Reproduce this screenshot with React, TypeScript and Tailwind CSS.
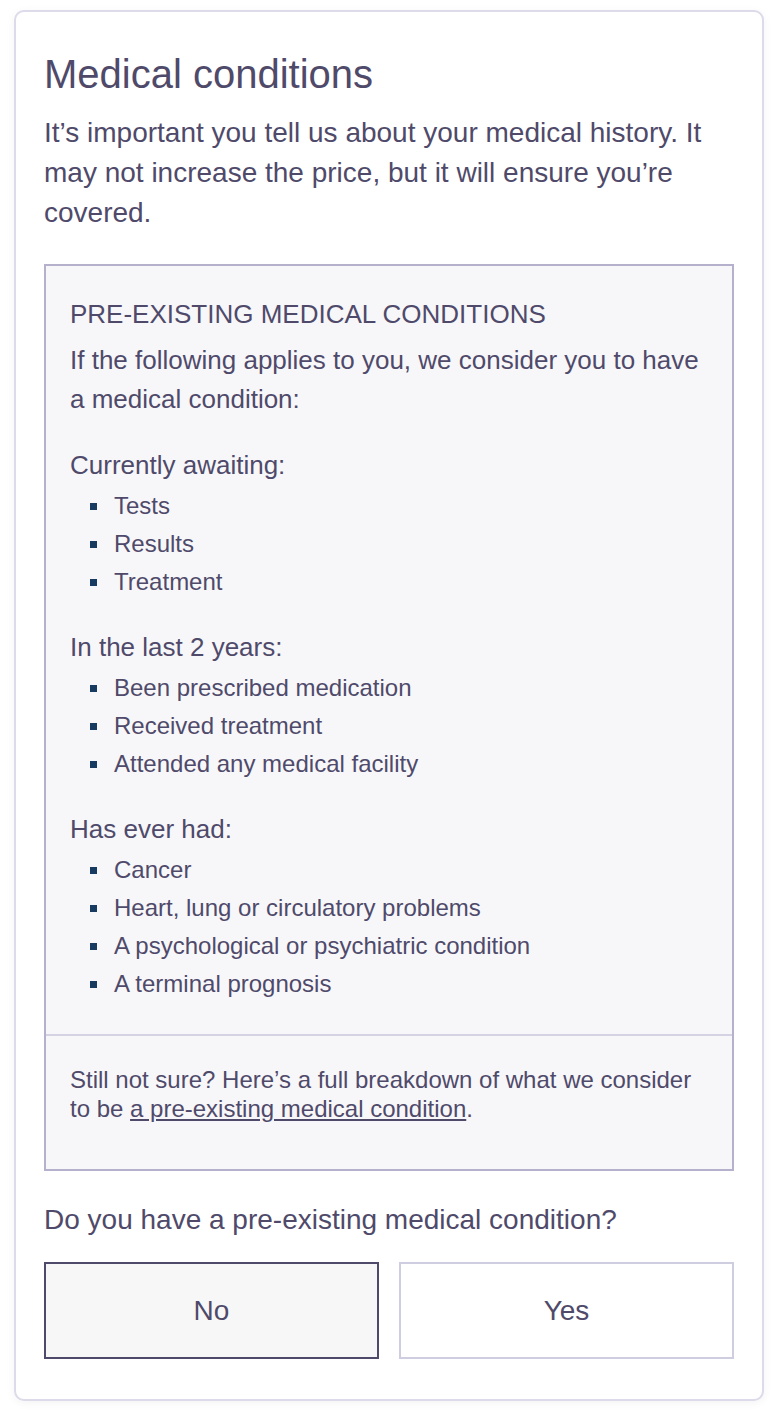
import React from "react";

const groups = [
  { title: "Currently awaiting:", items: ["Tests", "Results", "Treatment"] },
  {
    title: "In the last 2 years:",
    items: ["Been prescribed medication", "Received treatment", "Attended any medical facility"],
  },
  {
    title: "Has ever had:",
    items: [
      "Cancer",
      "Heart, lung or circulatory problems",
      "A psychological or psychiatric condition",
      "A terminal prognosis",
    ],
  },
];

export default function App() {
  return (
    <div className="min-h-screen bg-white pt-[10px] px-[14px] pb-[18px] font-['Liberation_Sans',Arial,sans-serif] text-[#4f4a6a]">
      <div className="rounded-[10px] border-2 border-[#dddaea] bg-white px-[28px] pt-[38px] pb-[40px] shadow-[0_2px_10px_rgba(0,0,0,0.05)]">
        <h1 className="text-[40px] leading-[48px]">Medical conditions</h1>
        <p className="mt-[15px] text-[28px] leading-[40px]">
          It’s important you tell us about your medical history. It may not increase the price, but it will
          ensure you’re covered.
        </p>

        <div className="mt-[31px] border-2 border-[#b5b1cc] bg-[#f7f7fa]">
          <div className="px-[24px] pt-[29px] pb-[31px]">
            <h2 className="text-[26px] leading-[39px]">PRE-EXISTING MEDICAL CONDITIONS</h2>
            <p className="mt-[7px] text-[26px] leading-[39px]">
              If the following applies to you, we consider you to have a medical condition:
            </p>
            {groups.map((g) => (
              <div key={g.title} className="mt-[27px]">
                <div className="text-[26px] leading-[39px]">{g.title}</div>
                <ul className="mt-[2px]">
                  {g.items.map((it) => (
                    <li key={it} className="flex items-center text-[24px] leading-[38px]">
                      <span className="ml-[20px] mr-[17px] h-[7px] w-[7px] bg-[#163a60]" />
                      {it}
                    </li>
                  ))}
                </ul>
              </div>
            ))}
          </div>
          <div className="border-t-2 border-[#d5d2e4] px-[24px] pt-[29px] pb-[46px] text-[24px] leading-[29px]">
            Still not sure? Here’s a full breakdown of what we consider to be{" "}
            <a href="#" className="underline underline-offset-2">
              a pre-existing medical condition
            </a>
            .
          </div>
        </div>

        <p className="mt-[32px] text-[28px] leading-[34px]">Do you have a pre-existing medical condition?</p>

        <div className="mt-[25px] grid grid-cols-2 gap-[20px]">
          <button className="h-[97px] border-2 border-[#4f4a6a] bg-[#f7f7f8] text-[28px] text-[#4f4a6a]">
            No
          </button>
          <button className="h-[97px] border-2 border-[#cfcde0] bg-white text-[28px] text-[#4f4a6a]">
            Yes
          </button>
        </div>
      </div>
    </div>
  );
}
